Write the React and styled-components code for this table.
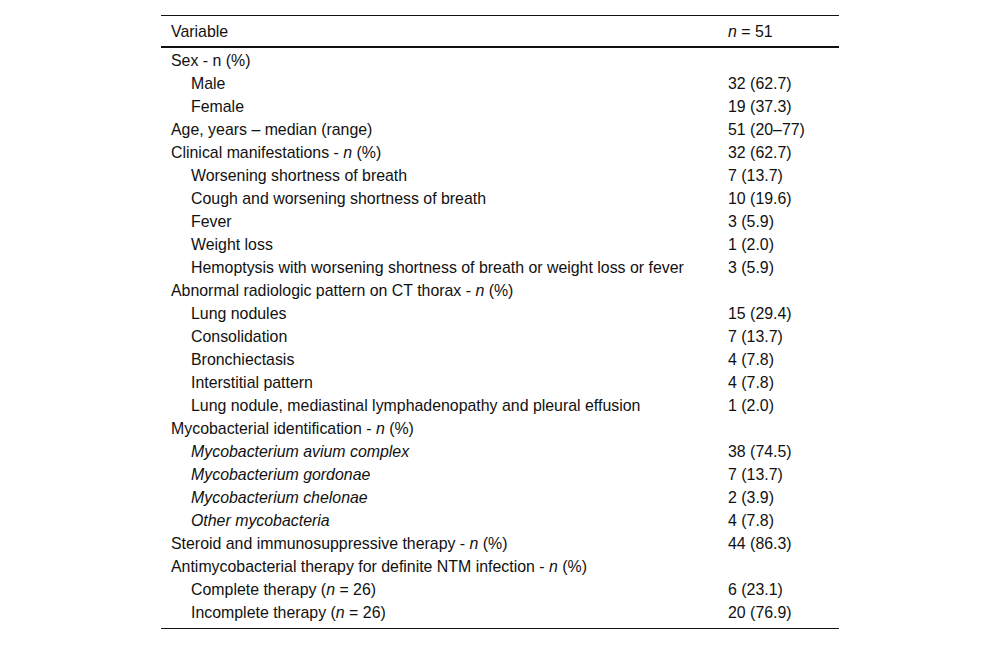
import React from "react";
import styled, { createGlobalStyle } from "styled-components";

const Global = createGlobalStyle`
  html, body { margin: 0; padding: 0; background: #fff; }
  body { font-family: "Liberation Sans", Arial, sans-serif; color: #111; }
`;

const Page = styled.div`
  display: flex;
  justify-content: center;
  padding-top: 15px;
`;

const Table = styled.div`
  width: 678px;
  border-top: 1px solid #111;
  border-bottom: 1px solid #111;
  font-size: 15.9px;
  line-height: 23px;
`;

const Head = styled.div`
  display: grid;
  grid-template-columns: 567px 1fr;
  height: 30px;
  align-items: center;
  border-bottom: 2px solid #111;
`;

const Body = styled.div`
  padding-top: 1px;
  padding-bottom: 4px;
`;

const Row = styled.div`
  display: grid;
  grid-template-columns: 567px 1fr;
  height: 23px;
  align-items: center;
`;

const Label = styled.div`
  padding-left: ${(p) => (p.$indent ? 30 : 10)}px;
  font-style: ${(p) => (p.$italic ? "italic" : "normal")};
  white-space: nowrap;
`;

const Value = styled.div`
  white-space: nowrap;
`;

const I = styled.i`
  font-style: italic;
`;

const rows = [
  { l: <>Sex - n (%)</>, v: "" },
  { l: "Male", v: "32 (62.7)", ind: true },
  { l: "Female", v: "19 (37.3)", ind: true },
  { l: "Age, years – median (range)", v: "51 (20–77)" },
  { l: <>Clinical manifestations - <I>n</I> (%)</>, v: "32 (62.7)" },
  { l: "Worsening shortness of breath", v: "7 (13.7)", ind: true },
  { l: "Cough and worsening shortness of breath", v: "10 (19.6)", ind: true },
  { l: "Fever", v: "3 (5.9)", ind: true },
  { l: "Weight loss", v: "1 (2.0)", ind: true },
  { l: "Hemoptysis with worsening shortness of breath or weight loss or fever", v: "3 (5.9)", ind: true },
  { l: <>Abnormal radiologic pattern on CT thorax - <I>n</I> (%)</>, v: "" },
  { l: "Lung nodules", v: "15 (29.4)", ind: true },
  { l: "Consolidation", v: "7 (13.7)", ind: true },
  { l: "Bronchiectasis", v: "4 (7.8)", ind: true },
  { l: "Interstitial pattern", v: "4 (7.8)", ind: true },
  { l: "Lung nodule, mediastinal lymphadenopathy and pleural effusion", v: "1 (2.0)", ind: true },
  { l: <>Mycobacterial identification - <I>n</I> (%)</>, v: "" },
  { l: "Mycobacterium avium complex", v: "38 (74.5)", ind: true, it: true },
  { l: "Mycobacterium gordonae", v: "7 (13.7)", ind: true, it: true },
  { l: "Mycobacterium chelonae", v: "2 (3.9)", ind: true, it: true },
  { l: "Other mycobacteria", v: "4 (7.8)", ind: true, it: true },
  { l: <>Steroid and immunosuppressive therapy - <I>n</I> (%)</>, v: "44 (86.3)" },
  { l: <>Antimycobacterial therapy for definite NTM infection - <I>n</I> (%)</>, v: "" },
  { l: <>Complete therapy (<I>n</I> = 26)</>, v: "6 (23.1)", ind: true },
  { l: <>Incomplete therapy (<I>n</I> = 26)</>, v: "20 (76.9)", ind: true },
];

export default function App() {
  return (
    <>
      <Global />
      <Page>
        <Table>
          <Head>
            <Label>Variable</Label>
            <Value><I>n</I> = 51</Value>
          </Head>
          <Body>
            {rows.map((r, i) => (
              <Row key={i}>
                <Label $indent={r.ind} $italic={r.it}>{r.l}</Label>
                <Value>{r.v}</Value>
              </Row>
            ))}
          </Body>
        </Table>
      </Page>
    </>
  );
}
